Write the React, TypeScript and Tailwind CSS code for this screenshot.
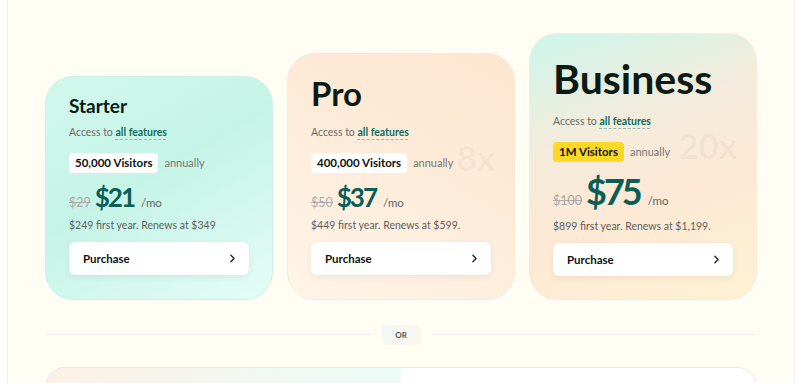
import { ChevronRight } from "lucide-react"

type Plan = {
  name: string
  titleCls: string
  visitors: string
  badgeCls: string
  badgeGap: string
  was: string
  price: string
  priceCls: string
  priceRowCls: string
  moCls: string
  note: string
  cardCls: string
  mark?: string
  markCls?: string
}

const plans: Plan[] = [
  {
    name: "Starter",
    titleCls: "pt-[19px] text-[19px] mb-[9px]",
    visitors: "50,000 Visitors",
    badgeCls: "bg-white",
    badgeGap: "mt-[13px]",
    was: "$29",
    price: "$21",
    priceCls: "text-[26px] tracking-[-2px]",
    priceRowCls: "mt-[11px] mb-[5px]",
    moCls: "ml-[3px]",
    note: "$249 first year. Renews at $349",
    cardCls: "pb-[24px] bg-[linear-gradient(150deg,#d3f8ee_0%,#c5f4e6_45%,#e4fcf7_100%)] border-[#cdf1e7]",
  },
  {
    name: "Pro",
    titleCls: "pt-[23px] text-[33px] mb-[14px]",
    visitors: "400,000 Visitors",
    badgeCls: "bg-white",
    badgeGap: "mt-[13px]",
    was: "$50",
    price: "$37",
    priceCls: "text-[26px] tracking-[-2px]",
    priceRowCls: "mt-[11px] mb-[5px]",
    moCls: "ml-[3px]",
    note: "$449 first year. Renews at $599.",
    cardCls: "pb-[24px] bg-[linear-gradient(210deg,#fde6cf_0%,#fdecda_50%,#fff5e8_100%)] border-[#f8ead9]",
    mark: "8x",
    markCls: "top-[86px]",
  },
  {
    name: "Business",
    titleCls: "pt-[24px] text-[41px] mb-[14px]",
    visitors: "1M Visitors",
    badgeCls: "bg-[#fcd926]",
    badgeGap: "mt-[13px]",
    was: "$100",
    price: "$75",
    priceCls: "text-[36px] tracking-[-3px]",
    priceRowCls: "mt-[11px] mb-[8px]",
    moCls: "ml-[4px]",
    note: "$899 first year. Renews at $1,199.",
    cardCls: "pb-[23px] bg-[linear-gradient(160deg,#ccf6ea_0%,#f4ecdc_35%,#fde9d5_60%,#fdf1d3_100%)] border-[#f6ecdc]",
    mark: "20x",
    markCls: "top-[94px]",
  },
]

function PlanCard({ p }: { p: Plan }) {
  return (
    <div className={`relative w-[228px] rounded-[28px] border px-[23px] ${p.cardCls}`}>
      {p.mark && (
        <div className={`absolute right-[19px] text-[35px] font-bold leading-none text-black/[0.04] ${p.markCls}`}>
          {p.mark}
        </div>
      )}
      <div className={`font-bold leading-none text-[#0b1a12] ${p.titleCls}`}>{p.name}</div>
      <div className="text-[10.5px] leading-[16px] text-[#6b6b6b]">
        Access to{" "}
        <span className="font-bold text-[#0f6b60] underline decoration-dashed decoration-[#9bbab4] underline-offset-[3px]">
          all features
        </span>
      </div>
      <div className={`flex h-[20px] items-center gap-[6px] ${p.badgeGap}`}>
        <span className={`rounded-[4px] px-[6px] text-[11.5px] font-bold leading-[20px] text-[#111] ${p.badgeCls}`}>
          {p.visitors}
        </span>
        <span className="text-[11px] text-[#777]">annually</span>
      </div>
      <div className={`flex items-baseline gap-[4px] ${p.priceRowCls}`}>
        <span className="text-[12.5px] text-[#aaa] line-through">{p.was}</span>
        <span className={`font-bold leading-none text-[#0b5e55] ${p.priceCls}`}>{p.price}</span>
        <span className={`text-[11.5px] text-[#666] ${p.moCls}`}>/mo</span>
      </div>
      <div className="text-[10.5px] leading-[14px] text-[#5f5f5f]">{p.note}</div>
      <button className="mt-[10px] flex h-[33px] w-full items-center justify-between rounded-[6px] bg-white pl-[14px] pr-[10px] shadow-[0_2px_6px_rgba(0,0,0,0.06)]">
        <span className="text-[11.5px] font-bold text-[#111]">Purchase</span>
        <ChevronRight size={13} strokeWidth={2.5} className="text-[#222]" />
      </button>
    </div>
  )
}

export default function App() {
  return (
    <div className="h-[383px] overflow-hidden bg-white" style={{ fontFamily: "Lato, 'Open Sans', sans-serif" }}>
      <div className="ml-[7px] mr-[5px] h-full border-x border-[#eeeeee] bg-[#fffdf4] pt-[33px]">
        <div className="mx-auto flex w-[712px] items-end justify-between">
          {plans.map(p => (
            <PlanCard key={p.name} p={p} />
          ))}
        </div>
        <div className="mx-auto mt-[25px] flex w-[708px] items-center">
          <div className="h-px flex-1 bg-[#ececef]" />
          <div className="mx-[11px] flex h-[20px] w-[39px] items-center justify-center rounded-[5px] bg-[linear-gradient(135deg,#eefaf6,#fdf4ec)] text-[8px] font-bold text-[#555]">
            OR
          </div>
          <div className="h-px flex-1 bg-[#ececef]" />
        </div>
        <div className="mx-auto mt-[22px] flex h-[60px] w-[712px] overflow-hidden rounded-t-[20px] border border-[#e6e6ec]">
          <div className="w-1/2 bg-[linear-gradient(100deg,#fdf0e6_0%,#f3f7f0_50%,#ecfbf7_100%)]" />
          <div className="w-1/2 bg-white" />
        </div>
      </div>
    </div>
  )
}
